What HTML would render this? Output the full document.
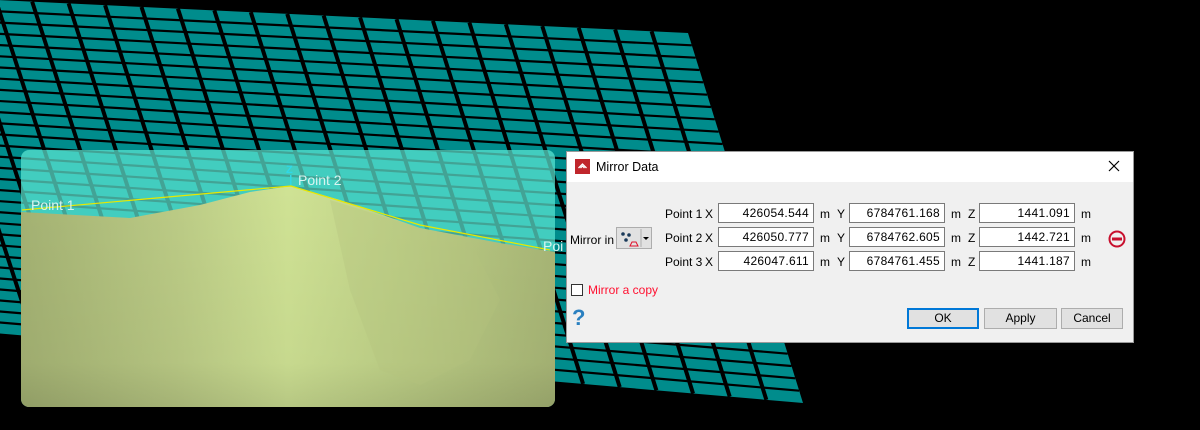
<!DOCTYPE html>
<html><head><meta charset="utf-8"><style>
html,body{margin:0;padding:0;background:#000;width:1200px;height:430px;overflow:hidden;font-family:"Liberation Sans",sans-serif}
.dlg{position:absolute;left:566px;top:151px;width:568px;height:192px;background:#f0f0f0;border:1px solid #9a9a9a;box-sizing:border-box}
.tb{position:absolute;left:0;top:0;right:0;height:30px;background:#fff}
.t{position:absolute;font-size:12px;color:#000;white-space:nowrap}
.in{position:absolute;height:20px;background:#fff;border:1px solid #7a7a7a;box-sizing:border-box;font-size:12px;text-align:right;padding-right:4px;line-height:18px;letter-spacing:0.3px}
.btn{position:absolute;top:156px;height:21px;background:#e1e1e1;border:1px solid #adadad;box-sizing:border-box;font-size:12px;text-align:center;line-height:19px}
</style></head><body>
<svg id="sc" width="1200" height="430" style="position:absolute;left:0;top:0">
<defs>
<linearGradient id="tg" x1="0" x2="1" y1="0" y2="0">
<stop offset="0" stop-color="#a4b273"/><stop offset="0.3" stop-color="#bccc86"/><stop offset="0.5" stop-color="#cfe294"/><stop offset="0.7" stop-color="#c0d288"/><stop offset="1" stop-color="#a8b676"/></linearGradient>
<linearGradient id="tv" x1="0" x2="0" y1="0" y2="1">
<stop offset="0" stop-color="#000" stop-opacity="0"/><stop offset="0.8" stop-color="#000" stop-opacity="0.04"/><stop offset="1" stop-color="#000" stop-opacity="0.12"/></linearGradient>
<clipPath id="bx"><rect x="21" y="150" width="534" height="257" rx="8"/></clipPath>
</defs>
<polygon points="-150,-7 688,33 803,403 -40,330" fill="#008c8c"/>
<g id="grid"></g>
<g clip-path="url(#bx)">
<rect x="21" y="150" width="534" height="257" fill="#5ee8d4" opacity="0.7"/>
<polygon points="21,212 130,218 200,205 250,192 291,186 340,200 420,228 500,243 555,252 555,407 21,407" fill="url(#tg)"/>
<polygon points="21,212 130,218 200,205 250,192 291,186 340,200 420,228 500,243 555,252 555,407 21,407" fill="url(#tv)"/>
<polygon points="330,200 420,228 470,240 500,300 470,360 420,385 380,370 350,290" fill="#b4c37e" opacity="0.35"/>
<polyline points="22,210 291,186 420,225 550,250" fill="none" stroke="#e8e800" stroke-width="1.2"/>
</g>
<text x="31" y="210" font-size="14" fill="#d8f4f0" font-family="Liberation Sans">Point 1</text>
<text x="298" y="185" font-size="14" fill="#d8f4f0" font-family="Liberation Sans">Point 2</text>
<text x="543" y="251" font-size="14" fill="#d8f4f0" font-family="Liberation Sans">Poi</text>
<text x="286" y="173" font-size="11" font-weight="bold" fill="#30d8e8" font-family="Liberation Sans">Z</text>
<rect x="290" y="175" width="1.5" height="10" fill="#30d8e8"/>
</svg>
<script>
(function(){
var g=document.getElementById('grid'),s='';
var TL=[-150,-7],TR=[688,33],BR=[803,403],BL=[-40,330];
function P(u,v){var tx=TL[0]+(TR[0]-TL[0])*u,ty=TL[1]+(TR[1]-TL[1])*u,bx=BL[0]+(BR[0]-BL[0])*u,by=BL[1]+(BR[1]-BL[1])*u;return [tx+(bx-tx)*v,ty+(by-ty)*v];}
var C=23,R=30;
for(var i=1;i<C;i++){var a=P(i/C,0),b=P(i/C,1);s+='<line x1="'+a[0]+'" y1="'+a[1]+'" x2="'+b[0]+'" y2="'+b[1]+'" stroke="#000" stroke-width="4"/>';}
for(var j=1;j<R;j++){var a=P(0,j/R),b=P(1,j/R);s+='<line x1="'+a[0]+'" y1="'+a[1]+'" x2="'+b[0]+'" y2="'+b[1]+'" stroke="#000" stroke-width="2.2"/>';}
g.innerHTML=s;})();
</script>
<div class="dlg">
<div class="tb">
<div style="position:absolute;left:8px;top:7px;width:15px;height:15px;background:#c0262c"></div>
<svg width="15" height="15" style="position:absolute;left:8px;top:7px"><path d="M3.5 9 L7.5 5 L11.5 9 M5.5 9 L7.5 7 L9.5 9" stroke="#fff" stroke-width="1.3" fill="none"/></svg>
<div class="t" style="left:29px;top:8px;font-size:12.5px">Mirror Data</div>
<svg width="12" height="12" style="position:absolute;left:541px;top:8px"><path d="M1 1L11 11M11 1L1 11" stroke="#000" stroke-width="1.2"/></svg>
</div>
<div class="t" style="left:3px;top:81px">Mirror in</div>
<div style="position:absolute;left:49px;top:75px;width:36px;height:22px;background:#e1e1e1;border:1px solid #adadad;box-sizing:border-box">
<svg width="36" height="22" style="position:absolute;left:-1px;top:-1px">
<circle cx="7" cy="7" r="1.8" fill="#1a3a5a"/><circle cx="13" cy="8" r="1.8" fill="#1a3a5a"/><circle cx="10" cy="13" r="1.8" fill="#1a3a5a"/>
<path d="M14 19 L16 15 L20 15 L22 19 Z" fill="none" stroke="#e0102a" stroke-width="1"/>
<line x1="25" y1="2" x2="25" y2="20" stroke="#adadad"/>
<path d="M27 10 L33 10 L30 13 Z" fill="#000"/></svg></div>
<div class="t" style="left:98px;top:55px">Point 1</div><div class="t" style="left:138px;top:55px">X</div>
<div class="t" style="left:98px;top:79px">Point 2</div><div class="t" style="left:138px;top:79px">X</div>
<div class="t" style="left:98px;top:103px">Point 3</div><div class="t" style="left:138px;top:103px">X</div>
<div class="in" style="left:151px;top:51px;width:96px">426054.544</div>
<div class="in" style="left:151px;top:75px;width:96px">426050.777</div>
<div class="in" style="left:151px;top:99px;width:96px">426047.611</div>
<div class="t" style="left:253px;top:55px">m</div><div class="t" style="left:253px;top:79px">m</div><div class="t" style="left:253px;top:103px">m</div>
<div class="t" style="left:270px;top:55px">Y</div><div class="t" style="left:270px;top:79px">Y</div><div class="t" style="left:270px;top:103px">Y</div>
<div class="in" style="left:282px;top:51px;width:96px">6784761.168</div>
<div class="in" style="left:282px;top:75px;width:96px">6784762.605</div>
<div class="in" style="left:282px;top:99px;width:96px">6784761.455</div>
<div class="t" style="left:384px;top:55px">m</div><div class="t" style="left:384px;top:79px">m</div><div class="t" style="left:384px;top:103px">m</div>
<div class="t" style="left:401px;top:55px">Z</div><div class="t" style="left:401px;top:79px">Z</div><div class="t" style="left:401px;top:103px">Z</div>
<div class="in" style="left:412px;top:51px;width:96px">1441.091</div>
<div class="in" style="left:412px;top:75px;width:96px">1442.721</div>
<div class="in" style="left:412px;top:99px;width:96px">1441.187</div>
<div class="t" style="left:514px;top:55px">m</div><div class="t" style="left:514px;top:79px">m</div><div class="t" style="left:514px;top:103px">m</div>
<svg width="20" height="20" style="position:absolute;left:540px;top:77px"><circle cx="10" cy="10" r="7.5" fill="none" stroke="#c8102e" stroke-width="2"/><rect x="5" y="8.5" width="10" height="3" fill="#c8102e"/></svg>
<div style="position:absolute;left:4px;top:132px;width:12px;height:12px;background:#fff;border:1px solid #333;box-sizing:border-box"></div>
<div class="t" style="left:21px;top:131px;color:#ff1030">Mirror a copy</div>
<div class="t" style="left:5px;top:153px;font-size:22px;font-weight:bold;color:#2a80c0">?</div>
<div class="btn" style="left:340px;width:72px;border:2px solid #0078d7;line-height:17px">OK</div>
<div class="btn" style="left:417px;width:73px">Apply</div>
<div class="btn" style="left:494px;width:62px">Cancel</div>
</div>
</body></html>
